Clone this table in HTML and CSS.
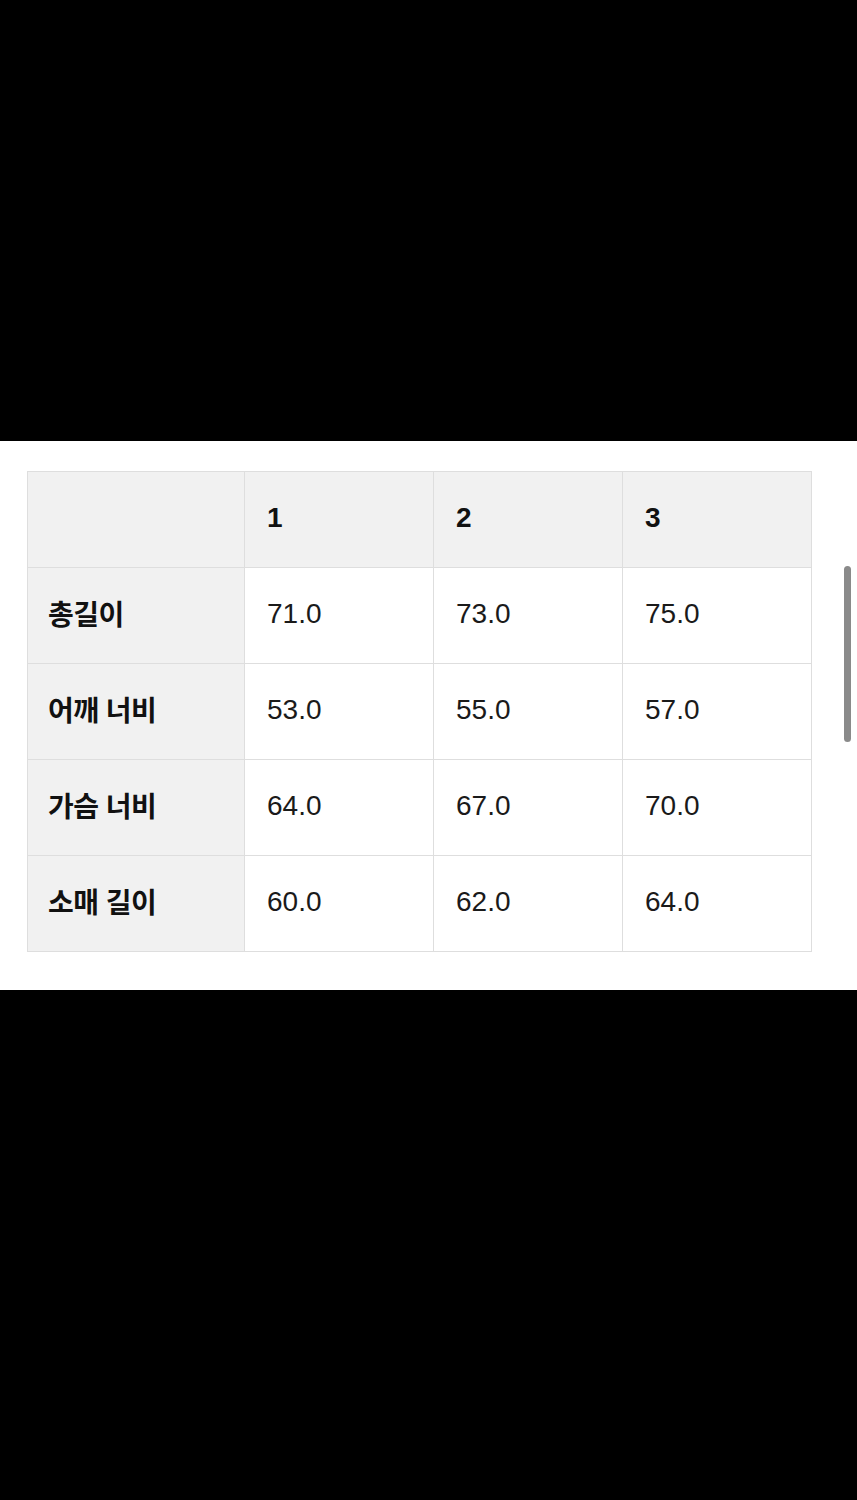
FILE: index.html
```html
<!DOCTYPE html>
<html lang="ko">
<head>
<meta charset="utf-8">
<link rel="stylesheet" href="styles.css">
</head>
<body>
<div class="top-band"></div>
<section class="panel">
  <table class="size-table">
    <colgroup>
      <col class="c-label"><col class="c-val"><col class="c-val"><col class="c-val">
    </colgroup>
    <thead>
      <tr><th class="corner"></th><th>1</th><th>2</th><th>3</th></tr>
    </thead>
    <tbody>
      <tr><th class="row-label">총길이</th><td>71.0</td><td>73.0</td><td>75.0</td></tr>
      <tr><th class="row-label">어깨 너비</th><td>53.0</td><td>55.0</td><td>57.0</td></tr>
      <tr><th class="row-label">가슴 너비</th><td>64.0</td><td>67.0</td><td>70.0</td></tr>
      <tr><th class="row-label">소매 길이</th><td>60.0</td><td>62.0</td><td>64.0</td></tr>
    </tbody>
  </table>
  <div class="scrollbar"></div>
</section>
</body>
</html>
```

FILE: styles.css
```css
html, body {
  margin: 0;
  padding: 0;
  background: #000;
}
body {
  width: 857px;
  height: 1500px;
  font-family: "Liberation Sans", "Noto Sans CJK KR", sans-serif;
  color: #111;
}
.top-band {
  height: 441px;
}
.panel {
  position: relative;
  background: #fff;
  height: 549px;
  box-sizing: border-box;
  padding: 30px 0 0 27px;
}
.size-table {
  border-collapse: collapse;
  table-layout: fixed;
  width: 785px;
}
.c-label { width: 217px; }
.c-val { width: 189px; }
.size-table th,
.size-table td {
  height: 96px;
  padding: 0 0 3px 22px;
  border: 1.5px solid #dedede;
  text-align: left;
  vertical-align: middle;
  box-sizing: border-box;
}
.size-table thead th {
  background: #f1f1f1;
  font-weight: 700;
  font-size: 28px;
  color: #111;
}
.size-table td {
  font-size: 28px;
  font-weight: 400;
  color: #1a1a1a;
  background: #fff;
}
.size-table .row-label {
  background: #f1f1f1;
  padding: 0 0 6px 20px;
  font-family: "Noto Sans CJK KR", sans-serif;
  font-weight: 700;
  font-size: 28px;
  letter-spacing: -0.5px;
  color: #111;
}
.scrollbar {
  position: absolute;
  left: 844px;
  top: 125px;
  width: 7px;
  height: 176px;
  border-radius: 4px;
  background: #8a8a8a;
}
```
